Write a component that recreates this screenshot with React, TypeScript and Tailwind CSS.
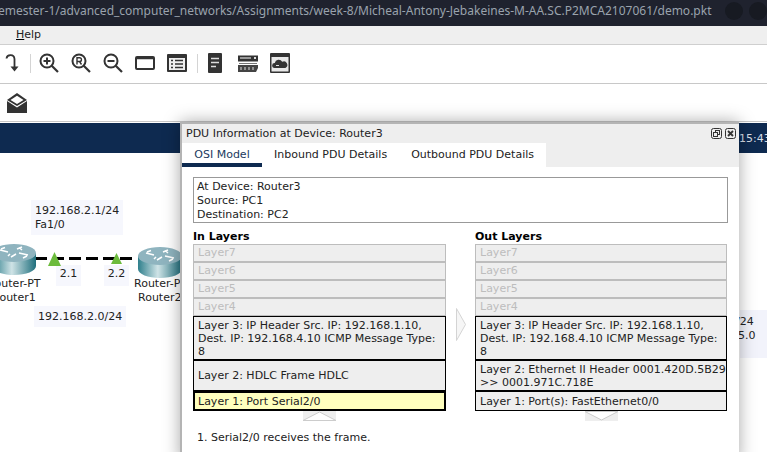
import { type FC } from 'react';

const font = "font-['DejaVu_Sans',sans-serif]";

const Redo: FC = () => (
  <svg width="14" height="20" viewBox="0 0 14 20" fill="none">
    <path d="M1.5 5.5C2 1.5 9 0.5 9.5 6V15" stroke="#333" strokeWidth="1.8" />
    <path d="M5.5 13.5h8l-4 5z" fill="#333" />
  </svg>
);

const Zoom: FC<{ mark: 'plus' | 'minus' | 'r' }> = ({ mark }) => (
  <svg width="20" height="20" viewBox="0 0 20 20" fill="none" stroke="#333">
    <circle cx="8" cy="8" r="6.5" strokeWidth="2" />
    <path d="M12.5 12.5L19 19" strokeWidth="2.2" />
    {mark !== 'r' && <path d="M4.5 8h7" strokeWidth="2" />}
    {mark === 'plus' && <path d="M8 4.5v7" strokeWidth="2" />}
    {mark === 'r' && <path d="M6 11.5V4.8h2.6a1.8 1.8 0 010 3.7H6M8.5 8.5l2 3" strokeWidth="1.4" />}
  </svg>
);

const WindowIcon: FC = () => (
  <svg width="20" height="14" viewBox="0 0 20 14" fill="none">
    <rect x="1" y="1" width="18" height="12" rx="1" stroke="#333" strokeWidth="2" />
    <path d="M1 2.5h18" stroke="#333" strokeWidth="1.5" />
  </svg>
);

const ListIcon: FC = () => (
  <svg width="20" height="18" viewBox="0 0 20 18">
    <rect width="20" height="18" rx="1" fill="#333" />
    <rect x="2" y="4" width="16" height="12" fill="#eee" />
    <path d="M4 6.5h2M8 6.5h8M4 10h2M8 10h8M4 13.5h2M8 13.5h8" stroke="#333" strokeWidth="1.5" />
  </svg>
);

const DocIcon: FC = () => (
  <svg width="14" height="20" viewBox="0 0 14 20">
    <rect width="14" height="20" rx="1" fill="#333" />
    <path d="M3 5.5h8M3 9.5h8M3 13.5h5" stroke="#ddd" strokeWidth="1.4" />
  </svg>
);

const ServerIcon: FC = () => (
  <svg width="20" height="17" viewBox="0 0 20 17">
    <rect y="0.5" width="20" height="6" fill="#333" />
    <path d="M2 3h11" stroke="#ddd" strokeWidth="1.2" />
    <rect x="16" y="2" width="2" height="2" fill="#ddd" />
    <path d="M1 8h18v1H1z" fill="#777" />
    <path d="M0 10h20v3L18 17H0z" fill="#444" />
    <path d="M3 12v3M7 12v3M11 12v3M15 12v3" stroke="#aaa" strokeWidth="1.5" />
  </svg>
);

const CloudIcon: FC = () => (
  <svg width="20" height="20" viewBox="0 0 20 20">
    <rect width="20" height="20" rx="1" fill="#333" />
    <rect x="1.5" y="4" width="17" height="14.5" fill="#e8e8e8" />
    <path d="M4.5 15a2.5 2.5 0 01.3-5 4 4 0 017.4-1.2 3.2 3.2 0 013.2 6.2z" fill="#333" />
    <path d="M6 12.5h3" stroke="#ddd" strokeWidth="1" />
  </svg>
);

const Mail: FC = () => (
  <svg width="20" height="20" viewBox="0 0 20 20">
    <path d="M0 7L10 0l10 7-10 6z" fill="#333" />
    <path d="M3.5 7L10 2.8 16.5 7 10 11z" fill="#fff" />
    <path d="M0 8l10 6.5L20 8v12H0z" fill="#333" />
  </svg>
);

const Sep: FC = () => <div className="w-px h-[19px] bg-[#d4d4d4]" />;

const RouterIcon: FC<{ id: string }> = ({ id }) => (
  <svg width="44" height="32" viewBox="0 0 44 32">
    <defs>
      <linearGradient id={id} x1="0" x2="1" y1="0" y2="0">
        <stop offset="0" stopColor="#2f7f8c" />
        <stop offset="0.45" stopColor="#cfe3e6" />
        <stop offset="1" stopColor="#1f6f7d" />
      </linearGradient>
    </defs>
    <path d="M0 9v13c0 5 10 9 22 9s22-4 22-9V9z" fill={`url(#${id})`} />
    <ellipse cx="22" cy="9" rx="22" ry="9" fill="#8fb4bf" />
    <path d="M8 6l8 2M13 3.5l-4 1.5M36 11l-9-2M31 14l4-2M19 13l5-3M18 10l-2 2M25 5l5-2M30 6l-3-2.5" stroke="#fff" strokeWidth="1.5" fill="none" />
  </svg>
);

const Disabled: FC<{ label: string }> = ({ label }) => (
  <div className="h-[18px] border border-[#bdbdbd] bg-[#eeeeee] pl-1 text-[#bdbdbd] leading-[16px]">{label}</div>
);

const Active: FC<{ h: string; yellow?: boolean; center?: boolean; text: string }> = ({ h, yellow, center, text }) => (
  <div
    className={`${h} border-black leading-[13px] text-[#222] ${yellow ? 'border-2 pl-[3px] bg-[#ffffbe]' : 'border pl-1 bg-[#eeeeee]'} ${center ? 'flex items-center' : 'pt-[2px]'}`}
  >
    <span>{text}</span>
  </div>
);

const LayerColumn: FC<{ title: string; rows: { h: string; text: string; yellow?: boolean; center?: boolean }[] }> = ({ title, rows }) => (
  <div className="flex flex-col">
    <div className="h-[14px] font-bold text-black leading-[14px]">{title}</div>
    <Disabled label="Layer7" />
    <Disabled label="Layer6" />
    <Disabled label="Layer5" />
    <Disabled label="Layer4" />
    {rows.map(r => (
      <Active key={r.text} {...r} />
    ))}
  </div>
);

const inRows = [
  { h: 'h-[44px]', text: 'Layer 3: IP Header Src. IP: 192.168.1.10, Dest. IP: 192.168.4.10 ICMP Message Type: 8' },
  { h: 'h-[31px]', text: 'Layer 2: HDLC Frame HDLC', center: true },
  { h: 'h-[20px]', text: 'Layer 1: Port Serial2/0', yellow: true, center: true },
];

const outRows = [
  { h: 'h-[44px]', text: 'Layer 3: IP Header Src. IP: 192.168.1.10, Dest. IP: 192.168.4.10 ICMP Message Type: 8' },
  { h: 'h-[31px]', text: 'Layer 2: Ethernet II Header 0001.420D.5B29 >> 0001.971C.718E' },
  { h: 'h-[20px]', text: 'Layer 1: Port(s): FastEthernet0/0', center: true },
];

const PduDialog: FC = () => (
  <div className={`${font} absolute left-[180px] top-[122px] w-[559px] h-[340px] bg-white border-l-2 border-t-2 border-[#b4b4b4] shadow-[0_0_16px_rgba(0,0,0,0.35)] text-[11px] text-[#222]`}>
    <div className="h-[19px] bg-[#eeeeee] flex items-center justify-between pl-1 pr-[3px]">
      <span className="text-[11px] pt-px">PDU Information at Device: Router3</span>
      <div className="flex gap-[3px]">
        <svg width="11" height="11" viewBox="0 0 11 11" fill="none" stroke="#333">
          <rect x="0.5" y="0.5" width="10" height="10" rx="2" />
          <rect x="4.5" y="2.5" width="4" height="4" />
          <rect x="2.5" y="4.5" width="4" height="4" fill="#eee" />
        </svg>
        <svg width="11" height="11" viewBox="0 0 11 11" fill="none" stroke="#333">
          <rect x="0.5" y="0.5" width="10" height="10" rx="2" />
          <path d="M3 3l5 5M8 3l-5 5" strokeWidth="1.8" />
        </svg>
      </div>
    </div>
    <div className="flex h-[24px] bg-[#eeeeee]">
      <div className="flex bg-white w-[364px]">
        <div className="w-[80px] h-[24px] border-b-4 border-[#0e2a50] text-center text-[#1c3a5e] leading-[24px]">OSI Model</div>
        <div className="ml-3 text-[#222] leading-[24px]">Inbound PDU Details</div>
        <div className="ml-6 text-[#222] leading-[24px]">Outbound PDU Details</div>
      </div>
    </div>
    <div className="pl-[11px] pt-[10px]">
      <div className="w-[535px] h-[46px] border border-[#999] pl-[3px] pt-[2px] leading-[14px]">
        <div>At Device: Router3</div>
        <div>Source: PC1</div>
        <div>Destination: PC2</div>
      </div>
      <div className="flex mt-[7px]">
        <div className="w-[253px]">
          <LayerColumn title="In Layers" rows={inRows} />
        </div>
        <div className="w-[29px] flex justify-center pt-[78px]">
          <svg width="10" height="33" viewBox="0 0 10 33" fill="#f6f6f6" stroke="#d4d4d4">
            <path d="M0.5 0.5L9.5 16.5 0.5 32.5z" />
          </svg>
        </div>
        <div className="w-[252px]">
          <LayerColumn title="Out Layers" rows={outRows} />
        </div>
      </div>
      <div className="flex h-[10px]">
        <div className="w-[253px] flex justify-center">
          <svg width="33" height="10" viewBox="0 0 33 10" fill="#fff" stroke="#ccc">
            <rect width="33" height="10" fill="#eee" stroke="none" />
            <path d="M0 9.5L16.5 1 33 9.5z" />
          </svg>
        </div>
        <div className="w-[29px]" />
        <div className="w-[252px] flex justify-center">
          <svg width="33" height="10" viewBox="0 0 33 10" fill="#fff" stroke="#ccc">
            <rect width="33" height="10" fill="#eee" stroke="none" />
            <path d="M0 0.5L16.5 9 33 0.5z" />
          </svg>
        </div>
      </div>
      <div className="pl-[4px] mt-[10px] leading-[14px]">1. Serial2/0 receives the frame.</div>
    </div>
  </div>
);

const App: FC = () => (
  <div className="relative w-[767px] h-[452px] overflow-hidden bg-white">
    <header className="h-[26px] bg-[#1f222e] relative overflow-hidden">
      <div className="absolute left-[-2px] top-0 whitespace-nowrap leading-[22px] text-[12px] text-[#9aa3ad] font-['Noto_Sans',sans-serif]">
        emester-1/advanced_computer_networks/Assignments/week-8/Micheal-Antony-Jebakeines-M-AA.SC.P2MCA2107061/demo.pkt
      </div>
      <div className="absolute left-[725px] top-[2px] w-[18px] h-[18px] rounded-full bg-[#171a22]" />
      <div className="absolute left-[749px] top-[2px] w-[18px] h-[18px] rounded-full bg-[#171a22]" />
    </header>
    <nav className={`${font} h-[19px] bg-[#efefef] border-b border-[#cfcfcf] text-[11px] text-[#222] pl-[16px] leading-[18px]`}>
      <span className="underline decoration-black">H</span>elp
    </nav>
    <div className="h-[39px] border-b border-[#c8c8c8] flex items-center pl-[4px] pb-[2px]">
      <div className="w-[16px] flex justify-center"><Redo /></div>
      <div className="ml-[10px]"><Sep /></div>
      <div className="ml-[8px] flex items-center gap-[12px]">
        <Zoom mark="plus" />
        <Zoom mark="r" />
        <Zoom mark="minus" />
        <WindowIcon />
        <ListIcon />
      </div>
      <div className="ml-[10px]"><Sep /></div>
      <div className="ml-[10px] flex items-center gap-[16px]">
        <DocIcon />
        <ServerIcon />
        <div className="-ml-[4px]"><CloudIcon /></div>
      </div>
    </div>
    <div className="h-[38px] border-b border-[#c8c8c8] flex items-center pl-[7px]">
      <Mail />
    </div>
    <div className="mt-px h-[30px] bg-[#0e2a50] flex items-center pl-[739px] overflow-hidden">
      <span className={`${font} text-[#d8dee6] text-[11px] leading-none whitespace-nowrap`}>15:43</span>
    </div>
    <main className={`${font} relative h-[300px] text-[11px] text-[#222] leading-[14px]`}>
      <div className="absolute left-[31px] top-[47px] w-[92px] h-[35px] bg-[#f6f7fd] pl-[4px] pt-[4px]">
        <div>192.168.2.1/24</div>
        <div>Fa1/0</div>
      </div>
      <div className="absolute left-[34px] top-[153px] w-[92px] h-[21px] bg-[#f6f7fd] pl-[4px] pt-[4px]">192.168.2.0/24</div>
      <div className="absolute left-[56px] top-[112px] w-[25px] h-[21px] bg-[#f6f7fd] text-center pt-[2px]">2.1</div>
      <div className="absolute left-[104px] top-[112px] w-[25px] h-[21px] bg-[#f6f7fd] text-center pt-[2px]">2.2</div>
      <div className="absolute left-[740px] top-[157px] w-[27px] h-[48px] bg-[#f2f3fb] pt-[5px] pl-0">
        <div className="-ml-[4px]">/24</div>
        <div className="-ml-[2px]">5.0</div>
      </div>
      <svg className="absolute left-[35px] top-[104px]" width="102" height="3" viewBox="0 0 102 3">
        <path d="M0 1.5H102" stroke="#000" strokeWidth="3" strokeDasharray="12 5" />
      </svg>
      <svg className="absolute left-[48px] top-[99px]" width="13" height="14" viewBox="0 0 13 14">
        <path d="M6.5 0L13 14H0z" fill="#6cbb3c" />
      </svg>
      <svg className="absolute left-[111px] top-[100px]" width="11" height="11" viewBox="0 0 11 11">
        <path d="M5.5 0L11 11H0z" fill="#6cbb3c" />
      </svg>
      <div className="absolute left-[-8px] top-[91px]"><RouterIcon id="r1" /></div>
      <div className="absolute left-[138px] top-[94px]"><RouterIcon id="r2" /></div>
      <div className="absolute left-[-21px] top-[124px] w-[70px] text-center">
        <div>Router-PT</div>
        <div>Router1</div>
      </div>
      <div className="absolute left-[134px] top-[124px] whitespace-nowrap">
        <div>Router-PT</div>
        <div className="pl-[4px]">Router2</div>
      </div>
    </main>
    <PduDialog />
  </div>
);

export default App;
